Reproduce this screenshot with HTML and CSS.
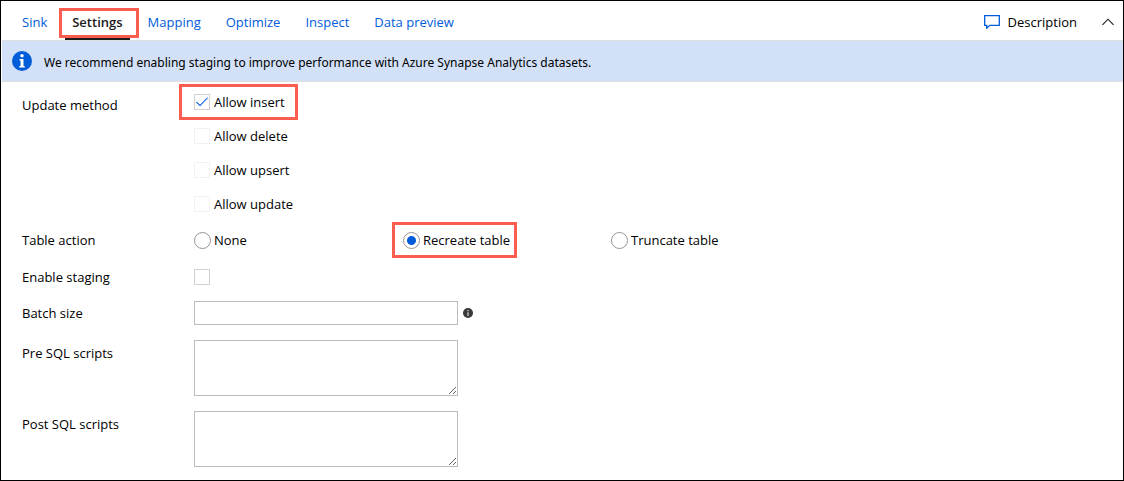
FILE: index.html
```html
<!DOCTYPE html>
<html lang="en">
<head>
<meta charset="utf-8">
<title>Sink settings</title>
<link rel="stylesheet" href="styles.css">
</head>
<body>
<div class="panel">
  <header class="topbar">
    <nav class="tabs">
      <a class="tab" href="#sink">Sink</a>
      <a class="tab tab-active" href="#settings" aria-current="page">Settings<span class="mark mark-tab"></span></a>
      <a class="tab" href="#mapping">Mapping</a>
      <a class="tab" href="#optimize">Optimize</a>
      <a class="tab" href="#inspect">Inspect</a>
      <a class="tab" href="#preview">Data preview</a>
    </nav>
    <div class="actions">
      <button class="action" type="button">
        <svg width="16" height="14" viewBox="0 0 16 14" fill="none" stroke="#015cda" stroke-width="1.3"><path d="M.7.7h14.6v9.6H5.8L2.7 13.2v-2.9h-2z"/></svg>
        Description
      </button>
      <button class="action" type="button" aria-label="Collapse">
        <svg width="12" height="8" viewBox="0 0 12 8" fill="none" stroke="#1b1a19" stroke-width="1.1"><path d="M.5 6.800L6 1.200l5.500 5.600"/></svg>
      </button>
    </div>
  </header>
  <div class="banner" role="status">
    <svg width="20" height="20" viewBox="0 0 20 20"><circle cx="10" cy="10" r="10" fill="#015cda"/><circle cx="10" cy="4.800" r="1.700" fill="#fff"/><path d="M7.500 8h4v7h1.200v1.500H7.300V15h1.200V9.500h-1z" fill="#fff"/></svg>
    <span class="banner-text">We recommend enabling staging to improve performance with Azure Synapse Analytics datasets.</span>
  </div>
  <form class="form">
    <div class="row" role="group" aria-labelledby="update-method">
      <span class="label label-update" id="update-method">Update method</span>
      <div class="checks">
        <label class="option"><input class="check" type="checkbox" checked>Allow insert<span class="mark mark-insert"></span></label>
        <label class="option"><input class="check check-faint" type="checkbox">Allow delete</label>
        <label class="option"><input class="check check-faint" type="checkbox">Allow upsert</label>
        <label class="option"><input class="check check-faint" type="checkbox">Allow update</label>
      </div>
    </div>
    <div class="row row-radio" role="radiogroup" aria-labelledby="table-action">
      <span class="label" id="table-action">Table action</span>
      <div class="radios">
        <label class="option"><input class="radio" type="radio" name="action">None</label>
        <label class="option"><input class="radio" type="radio" name="action" checked>Recreate table<span class="mark mark-recreate"></span></label>
        <label class="option"><input class="radio" type="radio" name="action">Truncate table</label>
      </div>
    </div>
    <div class="row row-staging">
      <label class="label" for="staging">Enable staging</label>
      <input class="check" type="checkbox" id="staging">
    </div>
    <div class="row row-batch">
      <label class="label" for="batch">Batch size</label>
      <div class="field-info">
        <input class="field" type="text" id="batch">
        <svg width="10" height="10" viewBox="0 0 10 10"><circle cx="5" cy="5" r="5" fill="#3b3a39"/><path d="M4.200 2h1.600v1.300H4.200zM4.200 4.200h1.600V8H4.200z" fill="#b5b3b1"/></svg>
      </div>
    </div>
    <div class="row row-script">
      <label class="label" for="pre">Pre SQL scripts</label>
      <textarea class="field field-area" id="pre"></textarea>
    </div>
    <div class="row row-script">
      <label class="label" for="post">Post SQL scripts</label>
      <textarea class="field field-area" id="post"></textarea>
    </div>
  </form>
</div>
</body>
</html>
```

FILE: styles.css
```css
* {
  box-sizing: border-box;
}

body {
  margin: 0;
  background: #fff;
  color: #000;
  font: 13px/20px "Open Sans", "Noto Sans", sans-serif;
}

svg {
  display: block;
  flex: none;
}

.panel {
  min-height: 100vh;
  padding: 0 0 13px 1px;
  border: 1px solid #000;
}

.topbar {
  display: flex;
  justify-content: space-between;
  height: 39px;
  padding: 0 9px 0 20px;
}

.tabs {
  display: flex;
  gap: 11px;
}

.tab {
  position: relative;
  padding: 11px 7px 5px;
  color: #015cda;
  text-decoration: none;
}

.tab:first-child {
  margin-left: -7px;
}

.tab-active {
  border-bottom: 2px solid #1b1a19;
  color: #1b1a19;
  font-weight: 600;
}

.actions {
  display: flex;
  align-items: center;
  gap: 25px;
  padding-top: 3px;
}

.action {
  display: flex;
  align-items: center;
  gap: 8px;
  padding: 0;
  border: 0;
  background: none;
  color: #000;
  font: inherit;
}

.banner {
  display: flex;
  align-items: center;
  gap: 12px;
  min-height: 42px;
  padding: 0 10px;
  border: solid #e1dfdd;
  border-width: 1px 0;
  background: #d2e1f8;
  font-family: "Noto Sans", sans-serif;
  font-size: 12px;
}

.banner-text {
  padding-top: 3px;
}

.form {
  padding: 3px 20px 0;
}

.row {
  display: grid;
  grid-template-columns: 172px 1fr;
  align-items: center;
}

.label-update {
  align-self: start;
  padding-top: 10px;
}

.option {
  position: relative;
  display: flex;
  align-items: center;
  justify-self: start;
  gap: 4px;
}

.checks {
  display: grid;
}

.checks .option {
  height: 34px;
}

.check,
.radio {
  flex: none;
  width: 16px;
  height: 16px;
  margin: 0;
  border: 1px solid #d2d0ce;
  background: #fff;
  appearance: none;
}

.check {
  display: grid;
  place-items: center;
}

.check-faint {
  border-color: #f3f2f1;
}

.check:checked::before {
  content: "";
  width: 12px;
  height: 10px;
  background: #015cda;
  clip-path: polygon(0 56%, 7% 48%, 34% 78%, 93% 4%, 100% 11%, 34% 92%);
}

.radio {
  width: 17px;
  height: 17px;
  border-color: #979593;
  border-radius: 50%;
}

.radio:checked {
  background: radial-gradient(circle, #015cda 4px, #fff 5px);
}

.row-radio {
  height: 38px;
}

.row-staging {
  height: 36px;
}

.radios {
  display: grid;
  grid-template-columns: 209px 208px 1fr;
}

.radios .option {
  gap: 3px;
}

.row-batch {
  margin-top: 6px;
}

.row-script {
  align-items: start;
  margin-top: 15px;
}

.row-script .label {
  padding-top: 3px;
}

.field-info {
  display: flex;
  align-items: center;
  gap: 5px;
}

.field {
  display: block;
  width: 264px;
  height: 24px;
  margin: 0;
  padding: 2px 6px;
  border: 1px solid #bebbb8;
  border-radius: 0;
  background: #fff;
  font: inherit;
}

.field-area {
  height: 56px;
}

.mark {
  position: absolute;
  border: 3px solid #fb5d50;
  pointer-events: none;
}

.mark-tab {
  inset: 7px -9px 0 -6px;
}

.mark-insert {
  inset: -1px -13px -1px -15px;
}

.mark-recreate {
  inset: -8px -7px -8px -11px;
}
```
